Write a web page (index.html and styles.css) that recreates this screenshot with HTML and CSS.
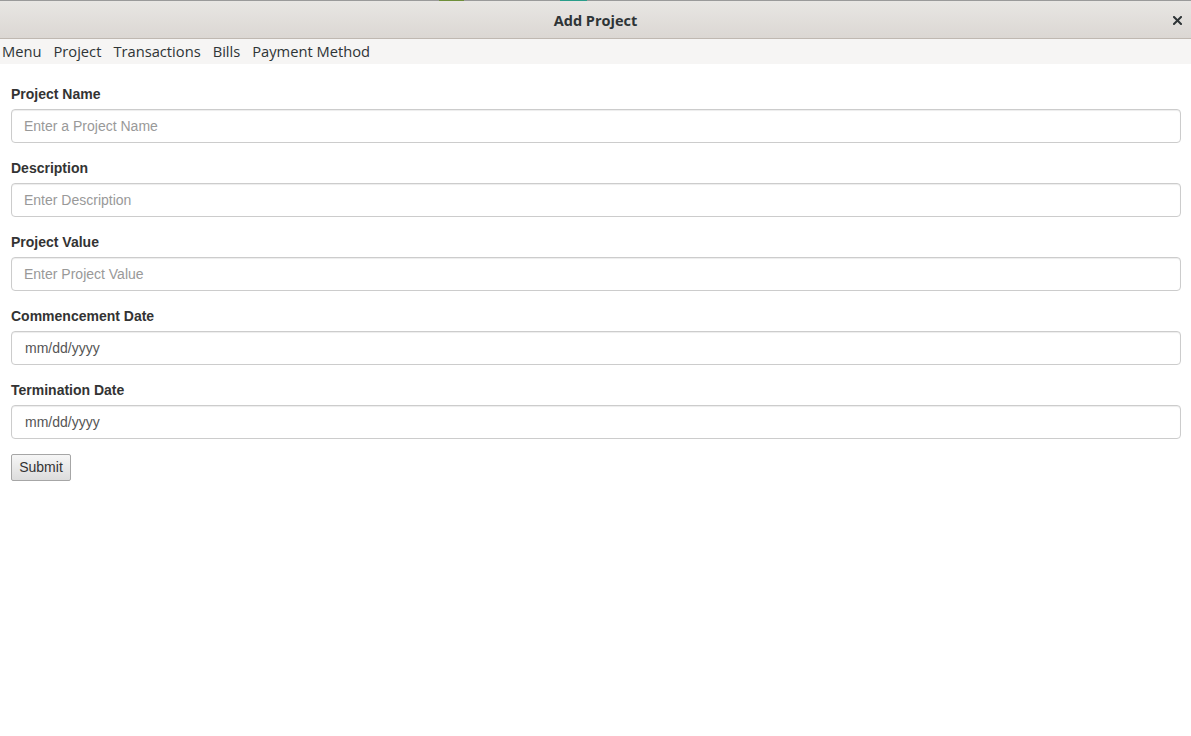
FILE: index.html
```html
<!DOCTYPE html>
<html>
<head>
<meta charset="utf-8">
<link rel="stylesheet" href="styles.css">
</head>
<body>
<div class="topline"><span class="tab tab-green"></span><span class="tab tab-teal"></span></div>
<header class="titlebar">
  <div class="title">Add Project</div>
  <button class="close" aria-label="Close">
    <svg width="9" height="9" viewBox="0 0 9 9"><path d="M1 1 L8 8 M8 1 L1 8" stroke="#2e3436" stroke-width="2" stroke-linecap="square" fill="none"/></svg>
  </button>
</header>
<nav class="menubar">
  <span class="menu-item">Menu</span>
  <span class="menu-item">Project</span>
  <span class="menu-item">Transactions</span>
  <span class="menu-item">Bills</span>
  <span class="menu-item">Payment Method</span>
</nav>
<main class="content">
  <form class="form">
    <div class="form-group">
      <label class="label">Project Name</label>
      <input class="input" type="text" placeholder="Enter a Project Name">
    </div>
    <div class="form-group">
      <label class="label">Description</label>
      <input class="input" type="text" placeholder="Enter Description">
    </div>
    <div class="form-group">
      <label class="label">Project Value</label>
      <input class="input" type="text" placeholder="Enter Project Value">
    </div>
    <div class="form-group">
      <label class="label">Commencement Date</label>
      <div class="input date">mm/dd/yyyy</div>
    </div>
    <div class="form-group">
      <label class="label">Termination Date</label>
      <div class="input date">mm/dd/yyyy</div>
    </div>
    <div><button type="button" class="submit">Submit</button></div>
  </form>
</main>
</body>
</html>
```
FILE: styles.css
```css
* { box-sizing: border-box; }
html, body { margin: 0; padding: 0; background: #fff; }
body { font-family: "Liberation Sans", Arial, sans-serif; font-size: 14px; color: #333; }

.topline { height: 1px; background: #9a9a9a; position: relative; }
.tab { position: absolute; top: 0; height: 2px; }
.tab-green { left: 439px; width: 25px; background: #6f8f3a; }
.tab-teal { left: 560px; width: 27px; background: #2a9d8a; }

.titlebar {
  height: 38px;
  background: linear-gradient(#e8e6e3, #dbd7d3);
  border-bottom: 1px solid #bfb8b1;
  display: flex;
  align-items: center;
  justify-content: center;
  position: relative;
  padding-top: 2px;
}
.title { font-family: "Open Sans", "Noto Sans", sans-serif; font-weight: 700; font-size: 14.5px; color: #2e3436; }
.close {
  position: absolute; right: 9px; top: 15px;
  width: 9px; height: 9px; padding: 0; border: 0; background: none;
  display: flex;
}

.menubar {
  height: 25px;
  background: #f6f5f4;
  display: flex;
  align-items: center;
  gap: 12px;
  padding-left: 2px;
  padding-bottom: 2px;
  font-family: "Open Sans", "Noto Sans", sans-serif;
  font-size: 14.7px;
  color: #2e3436;
}

.content { padding: 20px 10px 0 11px; }
.form-group { margin-bottom: 15px; display: flex; flex-direction: column; }
.label { font-weight: 700; line-height: 20px; margin-bottom: 5px; color: #333; }
.input {
  height: 34px;
  border: 1px solid #ccc;
  border-radius: 4px;
  padding: 6px 12px;
  font: 14px "Liberation Sans", Arial, sans-serif;
  color: #555;
  box-shadow: inset 0 1px 1px rgba(0,0,0,0.075);
  width: 100%;
}
.input::placeholder { color: #999; }
.date { line-height: 20px; color: #555; padding-left: 13px; }

.submit {
  height: 27px;
  width: 60px;
  padding: 0 0 1px;
  border: 1px solid #a6a6a6;
  border-radius: 2px;
  background: linear-gradient(#f6f6f6, #dcdcdc);
  font: 14px "Liberation Sans", Arial, sans-serif;
  color: #333;
}
```
